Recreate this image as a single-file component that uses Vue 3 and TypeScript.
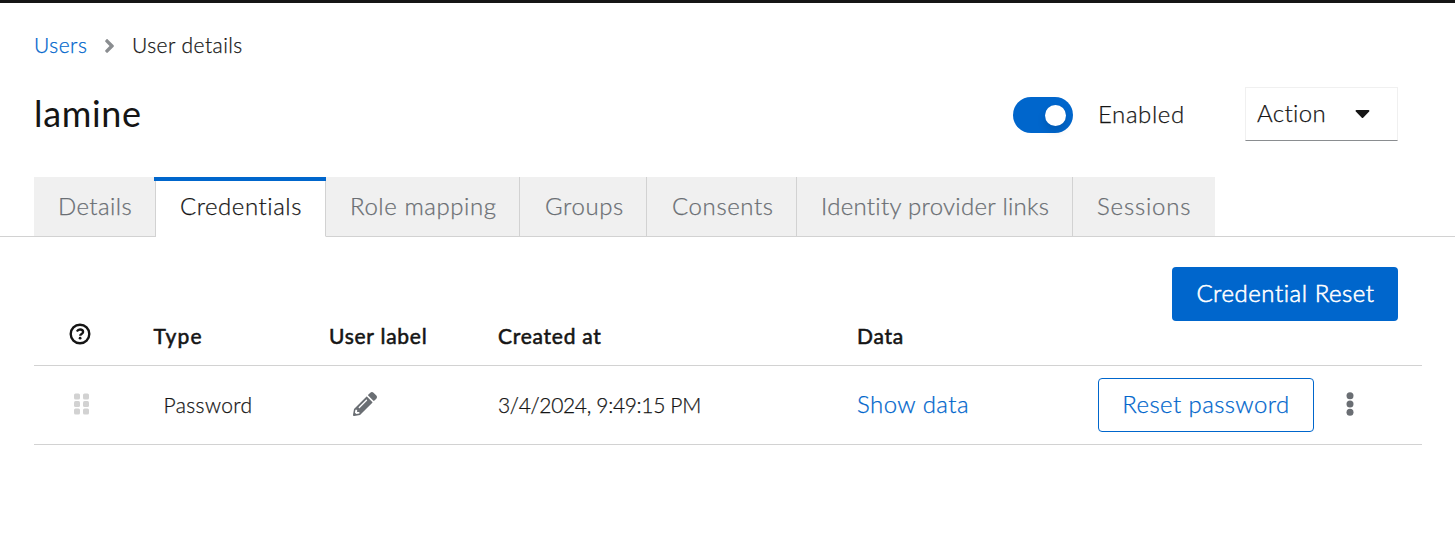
<script setup lang="ts">
import { ref } from 'vue'

interface Tab {
  id: string
  label: string
}

const tabs: Tab[] = [
  { id: 'details', label: 'Details' },
  { id: 'credentials', label: 'Credentials' },
  { id: 'roles', label: 'Role mapping' },
  { id: 'groups', label: 'Groups' },
  { id: 'consents', label: 'Consents' },
  { id: 'idp', label: 'Identity provider links' },
  { id: 'sessions', label: 'Sessions' },
]

const activeTab = ref('credentials')
const enabled = ref(true)
</script>

<template>
  <div class="page">
    <nav class="breadcrumb">
      <a class="crumb-link">Users</a>
      <svg class="crumb-sep" viewBox="0 0 256 512" fill="#8a8d90">
        <path d="M224.3 273l-136 136c-9.4 9.4-24.6 9.4-33.9 0l-22.6-22.6c-9.4-9.4-9.4-24.6 0-33.9l96.4-96.4-96.4-96.4c-9.4-9.4-9.4-24.6 0-33.9L54.3 103c9.4-9.4 24.6-9.4 33.9 0l136 136c9.5 9.4 9.5 24.6.1 34z" />
      </svg>
      <span class="crumb-current">User details</span>
    </nav>

    <header class="heading">
      <h1 class="title">lamine</h1>
      <div class="switch" :class="{ on: enabled }" @click="enabled = !enabled"><span class="knob"></span></div>
      <span class="switch-label">Enabled</span>
      <button class="action">
        <span class="action-label">Action</span>
        <svg class="caret" viewBox="0 0 320 512" fill="#151515">
          <path d="M31.3 192h257.3c17.8 0 26.7 21.5 14.1 34.1L174.1 354.7c-7.8 7.8-20.5 7.8-28.3 0L17.2 226.1C4.6 213.5 13.5 192 31.3 192z" />
        </svg>
      </button>
    </header>

    <div class="tabs">
      <button
        v-for="tab in tabs"
        :key="tab.id"
        class="tab"
        :class="[tab.id, { active: tab.id === activeTab }]"
        @click="activeTab = tab.id"
      ><span>{{ tab.label }}</span></button>
    </div>

    <div class="toolbar">
      <button class="btn primary"><span>Credential Reset</span></button>
    </div>

    <section class="table">
      <div class="row head">
        <div class="cell-help">
          <svg class="help" viewBox="0 0 22 22" fill="none" stroke="#151515">
            <circle cx="11" cy="11" r="9.3" stroke-width="2.4" />
            <path d="M7.9 8.6C8.6 7.2 9.6 6.5 11 6.5c1.8 0 3.1 1 3.1 2.5 0 2-2.9 2-2.9 3.7" stroke-width="2.3" />
            <circle cx="11.1" cy="15.2" r="1.4" fill="#151515" stroke="none" />
          </svg>
        </div>
        <div class="th-type">Type</div>
        <div class="th-label">User label</div>
        <div class="th-created">Created at</div>
        <div class="th-data">Data</div>
      </div>
      <div class="row body">
        <div class="cell-grip">
          <svg class="grip" viewBox="0 0 320 512" fill="#d2d2d2">
            <rect x="0" y="32" width="128" height="128" rx="32" />
            <rect x="192" y="32" width="128" height="128" rx="32" />
            <rect x="0" y="192" width="128" height="128" rx="32" />
            <rect x="192" y="192" width="128" height="128" rx="32" />
            <rect x="0" y="352" width="128" height="128" rx="32" />
            <rect x="192" y="352" width="128" height="128" rx="32" />
          </svg>
        </div>
        <div class="td-type">Password</div>
        <div class="td-label">
          <svg class="pencil" viewBox="0 0 512 512" fill="#6a6e73">
            <path d="M497.9 142.1l-46.1 46.1c-4.7 4.7-12.3 4.7-17 0l-111-111c-4.7-4.7-4.7-12.3 0-17l46.1-46.1c18.7-18.7 49.1-18.7 67.9 0l60.1 60.1c18.8 18.7 18.8 49.1 0 67.9zM284.2 99.8L21.6 362.4.4 483.9c-2.9 16.4 11.4 30.6 27.8 27.8l121.5-21.3 262.6-262.6c4.7-4.7 4.7-12.3 0-17l-111-111c-4.8-4.7-12.4-4.7-17.1 0zM124.1 339.9c-5.5-5.5-5.5-14.3 0-19.8l154-154c5.5-5.5 14.3-5.5 19.8 0s5.5 14.3 0 19.8l-154 154c-5.5 5.5-14.3 5.5-19.8 0zM88 424h48v36.3l-64.5 11.3-31.1-31.1L51.7 376H88v48z" />
          </svg>
        </div>
        <div class="td-created">3/4/2024, 9:49:15 PM</div>
        <div class="td-data">Show data</div>
        <button class="btn secondary"><span>Reset password</span></button>
        <svg class="kebab" viewBox="0 0 8 24" fill="#6a6e73">
          <circle cx="4" cy="3.8" r="3.5" />
          <circle cx="4" cy="12" r="3.5" />
          <circle cx="4" cy="20.2" r="3.5" />
        </svg>
      </div>
    </section>
  </div>
</template>

<style>
body {
  background: #fff;
}
</style>

<style scoped>
.page {
  box-sizing: border-box;
  width: 1455px;
  height: 540px;
  border-top: 3px solid #151515;
  background: #fff;
  color: #151515;
  font-family: Lato, "Open Sans", sans-serif;
  font-weight: 300;
  font-size: 24px;
  font-variant-ligatures: none;
  -webkit-text-stroke: 0.25px currentColor;
  overflow: hidden;
  white-space: nowrap;
}
button {
  box-sizing: border-box;
  margin: 0;
  padding: 0;
  border: 0;
  background: none;
  font: inherit;
  font-variant-ligatures: none;
  color: inherit;
  text-align: left;
}
svg {
  display: block;
  flex: none;
}
.breadcrumb {
  display: flex;
  align-items: center;
  height: 30px;
  padding: 28px 0 0 34px;
  font-size: 21px;
}
.crumb-link {
  width: 70px;
  padding-bottom: 3px;
  color: #06c;
  letter-spacing: 0.5px;
}
.crumb-current {
  padding-bottom: 3px;
  letter-spacing: 0.45px;
}
.crumb-sep {
  width: 11px;
  height: 22px;
  margin: 0 17px 1px 0;
}
.heading {
  display: flex;
  align-items: center;
  height: 54px;
  margin-top: 26px;
  padding-left: 34px;
}
.title {
  width: 979px;
  margin: 0;
  padding-bottom: 2px;
  font-size: 36px;
  font-weight: 400;
  letter-spacing: 0.65px;
  -webkit-text-stroke-width: 0;
}
.switch {
  box-sizing: border-box;
  display: flex;
  align-items: center;
  width: 60px;
  height: 36px;
  margin-top: 2px;
  padding: 0 7px;
  border-radius: 18px;
  background: #8a8d90;
}
.switch.on {
  justify-content: flex-end;
  background: #06c;
}
.knob {
  width: 21px;
  height: 21px;
  border-radius: 50%;
  background: #fff;
  box-shadow: 0 5px 9px rgba(3, 3, 3, 0.13);
}
.switch-label {
  width: 147px;
  padding: 0 0 2px 25px;
  letter-spacing: 0.6px;
}
.action {
  display: flex;
  align-items: center;
  width: 153px;
  height: 54px;
  padding-left: 11px;
  border: 1px solid #f0f0f0;
  border-bottom-color: #8a8d90;
}
.action-label {
  width: 97.5px;
  padding-bottom: 3px;
  letter-spacing: 0.35px;
}
.caret {
  width: 15px;
  height: 24px;
  margin-bottom: 2px;
}
.tabs {
  display: flex;
  height: 60px;
  margin-top: 36px;
  padding-left: 34px;
  box-shadow: inset 0 -1px #d2d2d2;
}
.tab {
  position: relative;
  height: 60px;
  padding: 0 0 2px 24px;
  border-right: 1px solid #d2d2d2;
  border-bottom: 1px solid #d2d2d2;
  background: #f0f0f0;
  color: #6a6e73;
}
.tab.active {
  border-bottom-color: #fff;
  background: #fff;
  color: #151515;
}
.tab.active::before {
  content: "";
  position: absolute;
  top: 0;
  left: -2px;
  right: -1px;
  height: 4px;
  background: #06c;
}
.details { width: 122px; letter-spacing: 0.4px; }
.credentials { width: 170px; letter-spacing: 0.55px; }
.roles { width: 194px; letter-spacing: 0.57px; }
.groups { width: 127px; padding-left: 25px; letter-spacing: 0.6px; }
.consents { width: 150px; padding-left: 25px; letter-spacing: 0.6px; }
.idp { width: 276px; letter-spacing: 0.29px; }
.sessions { width: 142px; border-right: 0; letter-spacing: 0.82px; }
.toolbar {
  display: flex;
  justify-content: flex-end;
  padding: 30px 57px 0 0;
}
.btn {
  height: 54px;
  padding-bottom: 3px;
  border-radius: 4px;
  text-align: center;
}
.primary {
  width: 226px;
  padding-left: 1px;
  background: #06c;
  color: #fff;
  letter-spacing: 0.55px;
  -webkit-text-stroke-width: 0.6px;
}
.secondary {
  width: 216px;
  border: 1px solid #06c;
  color: #06c;
  font-size: 24px;
  letter-spacing: 0.4px;
}
.table {
  margin: -12px 33px 0 34px;
}
.row {
  box-sizing: border-box;
  display: grid;
  align-items: center;
  border-bottom: 1px solid #d2d2d2;
}
.head {
  grid-template-columns: 119px 176px 169px 359px 1fr;
  height: 57px;
  padding-bottom: 3px;
  font-size: 21px;
  font-weight: 400;
  letter-spacing: 0.75px;
  -webkit-text-stroke-width: 0.55px;
}
.th-type {
  padding-left: 0.5px;
  letter-spacing: 1.3px;
}
.body {
  grid-template-columns: 129px 190px 145px 359px 241px 216px 1fr;
  height: 79px;
  font-size: 21px;
}
.help {
  width: 22px;
  height: 22px;
  margin: -4px 0 0 35px;
  stroke-linecap: butt;
}
.grip {
  width: 15px;
  height: 24px;
  margin: 0 0 2px 40px;
}
.pencil {
  width: 24px;
  height: 24px;
  margin-bottom: 2px;
}
.td-type {
  padding: 0 0 2px 0.5px;
  letter-spacing: 0.4px;
}
.td-created {
  padding-bottom: 2px;
  letter-spacing: -0.33px;
}
.td-data {
  padding-bottom: 3px;
  color: #06c;
  font-size: 24px;
  letter-spacing: 0.45px;
}
.kebab {
  width: 8px;
  height: 24px;
  margin: 0 0 2px 32px;
}
</style>
